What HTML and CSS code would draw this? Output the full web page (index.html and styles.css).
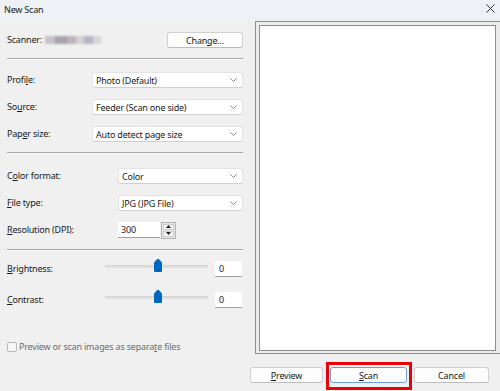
FILE: index.html
```html
<!DOCTYPE html>
<html lang="en">
<head>
    <meta charset="UTF-8">
    <title>New Scan</title>
    <link rel="stylesheet" href="styles.css">
</head>
<body>
    <div class="window">
        <div class="titlebar">
            <span class="title">New Scan</span>
            <svg class="close" width="9" height="9" viewBox="0 0 9 9"><path d="M0.5 0.5 L8.5 8.5 M8.5 0.5 L0.5 8.5" stroke="#333" stroke-width="1"/></svg>
        </div>
        <div class="content">
            <div class="settings">
                <div class="scanner-row">
                    <span class="label">Scanner:</span>
                    <span class="scanner-name"><i class="b1"></i><i class="b2"></i><i class="b3"></i><i class="b4"></i><i class="b5"></i><i class="b6"></i></span>
                    <button class="btn change">Chan<u>g</u>e...</button>
                </div>
                <div class="sep"></div>
                <div class="group wide">
                    <span class="label">Profi<u>l</u>e:</span>
                    <div class="select">Photo (Default)<svg class="chev" width="7" height="4" viewBox="0 0 7 4"><path d="M0.5 0.5 L3.5 3.5 L6.5 0.5" stroke="#8a8a8a" fill="none"/></svg></div>
                    <span class="label">So<u>u</u>rce:</span>
                    <div class="select">Feeder (Scan one side)<svg class="chev" width="7" height="4" viewBox="0 0 7 4"><path d="M0.5 0.5 L3.5 3.5 L6.5 0.5" stroke="#8a8a8a" fill="none"/></svg></div>
                    <span class="label">Pap<u>e</u>r size:</span>
                    <div class="select">Auto detect page size<svg class="chev" width="7" height="4" viewBox="0 0 7 4"><path d="M0.5 0.5 L3.5 3.5 L6.5 0.5" stroke="#8a8a8a" fill="none"/></svg></div>
                </div>
                <div class="sep"></div>
                <div class="group narrow">
                    <span class="label">C<u>o</u>lor format:</span>
                    <div class="select">Color<svg class="chev" width="7" height="4" viewBox="0 0 7 4"><path d="M0.5 0.5 L3.5 3.5 L6.5 0.5" stroke="#8a8a8a" fill="none"/></svg></div>
                    <span class="label"><u>F</u>ile type:</span>
                    <div class="select">JPG (JPG File)<svg class="chev" width="7" height="4" viewBox="0 0 7 4"><path d="M0.5 0.5 L3.5 3.5 L6.5 0.5" stroke="#8a8a8a" fill="none"/></svg></div>
                    <span class="label"><u>R</u>esolution (DPI):</span>
                    <div class="spin">
                        <div class="field">300</div>
                        <div class="spin-btns">
                            <span class="arrow"><svg width="5" height="3" viewBox="0 0 5 3"><path d="M0 3 L2.5 0 L5 3 Z" fill="#222"/></svg></span>
                            <span class="arrow"><svg width="5" height="3" viewBox="0 0 5 3"><path d="M0 0 L2.5 3 L5 0 Z" fill="#222"/></svg></span>
                        </div>
                    </div>
                </div>
                <div class="sep sep-low"></div>
                <div class="adjust">
                    <span class="label"><u>B</u>rightness:</span>
                    <div class="slider"><div class="track"></div><svg class="thumb" width="10" height="14" viewBox="0 0 10 14"><path d="M1 4.5 L4 1.2 Q5 0.2 6 1.2 L9 4.5 V13 Q9 14 8 14 H2 Q1 14 1 13 Z" fill="#0067c0"/></svg></div>
                    <div class="num">0</div>
                    <span class="label"><u>C</u>ontrast:</span>
                    <div class="slider"><div class="track"></div><svg class="thumb" width="10" height="14" viewBox="0 0 10 14"><path d="M1 4.5 L4 1.2 Q5 0.2 6 1.2 L9 4.5 V13 Q9 14 8 14 H2 Q1 14 1 13 Z" fill="#0067c0"/></svg></div>
                    <div class="num">0</div>
                </div>
                <label class="check">
                    <span class="box"></span>
                    <span>Preview or scan images as separa<u>t</u>e files</span>
                </label>
            </div>
            <div class="pane">
                <div class="frame"><div class="paper"></div></div>
                <div class="actions">
                    <button class="btn preview"><u>P</u>review</button>
                    <div class="scan-wrap">
                        <button class="btn scan"><u>S</u>can</button>
                        <div class="highlight"></div>
                    </div>
                    <button class="btn cancel">Cancel</button>
                </div>
            </div>
        </div>
    </div>
</body>
</html>
```

FILE: styles.css
```css
body {
    margin: 0;
    background: #f0f0f0;
    font-family: "Noto Sans", "Open Sans", sans-serif;
    font-size: 9px;
    letter-spacing: -0.2px;
    color: #1a1a1a;
    overflow: hidden;
}
.window {
    width: 500px;
    height: 391px;
}
.titlebar {
    height: 20px;
    background: #eef2f7;
    display: flex;
    align-items: center;
    justify-content: space-between;
    padding: 0 5px 2px 4px;
    box-sizing: border-box;
}
.close {
    margin-top: -1px;
}
.content {
    display: flex;
}
.settings {
    width: 250px;
    padding: 0 7px;
    box-sizing: border-box;
}
.label {
    line-height: 16px;
}
u {
    text-decoration-thickness: 1px;
    text-underline-offset: 1px;
}
.scanner-row {
    display: flex;
    align-items: center;
    margin-top: 12px;
    height: 16px;
}
.scanner-name {
    display: flex;
    margin-left: 3px;
    height: 8px;
    filter: blur(0.8px);
}
.scanner-name i {
    display: block;
    height: 8px;
}
.b1 { width: 10px; background: #c9c3cb; }
.b2 { width: 12px; background: #aaa2ac; }
.b3 { width: 9px; background: #bdb4bd; }
.b4 { width: 8px; background: #d3d3d3; }
.b5 { width: 9px; background: #b7b3c2; }
.b6 { width: 8px; background: #d8d6dc; }
.btn {
    font-family: inherit;
    font-size: 9px;
    letter-spacing: inherit;
    color: #1a1a1a;
    background: #fdfdfd;
    border: 1px solid #d0d0d0;
    border-bottom-color: #bcbcbc;
    border-radius: 3px;
    height: 16px;
    padding: 0;
    box-sizing: border-box;
}
.change {
    width: 76px;
    margin-left: auto;
}
.sep {
    height: 1px;
    background: #a8a8a8;
    border-bottom: 1px solid #fafafa;
    margin-top: 10px;
}
.group {
    display: grid;
    row-gap: 11px;
    align-items: center;
    margin-top: 12px;
}
.group.wide {
    grid-template-columns: 85px 1fr;
}
.group.narrow {
    grid-template-columns: 111px 1fr;
    margin-top: 14px;
}
.select {
    height: 16px;
    background: #fff;
    border: 1px solid #e3e3e3;
    border-bottom-color: #cfcfcf;
    border-radius: 3px;
    box-sizing: border-box;
    display: flex;
    align-items: center;
    padding: 0 5px 0 3px;
}
.chev {
    margin-left: auto;
}
.spin {
    display: flex;
    align-items: center;
    height: 16px;
}
.field {
    width: 42px;
    height: 16px;
    background: #fff;
    border-bottom: 1px solid #a0a0a0;
    box-sizing: border-box;
    padding-left: 3px;
    line-height: 15px;
}
.spin-btns {
    display: flex;
    flex-direction: column;
    gap: 1px;
    margin-left: 1px;
    padding: 1px;
    border: 1px solid #b4b4b4;
    background: #e8e8e8;
}
.arrow {
    width: 11px;
    height: 6px;
    background: #f6f6f6;
    border: 1px solid #cdcdcd;
    box-sizing: border-box;
    display: flex;
    align-items: center;
    justify-content: center;
}
.sep-low {
    margin-top: 11px;
}
.adjust {
    display: grid;
    grid-template-columns: 91px 103px 27px;
    column-gap: 7px;
    row-gap: 15px;
    align-items: center;
    margin-top: 10px;
}
.slider {
    position: relative;
    height: 16px;
}
.track {
    margin-top: 4px;
    height: 3px;
    background: #e0e0e0;
    border-top: 1px solid #d4d4d4;
    box-sizing: border-box;
}
.thumb {
    position: absolute;
    left: 48px;
    top: -3px;
}
.num {
    height: 16px;
    background: #fff;
    border-bottom: 1px solid #a0a0a0;
    box-sizing: border-box;
    padding-left: 4px;
    line-height: 15px;
}
.check {
    display: flex;
    align-items: center;
    gap: 2px;
    margin-top: 32px;
    color: #6d6d6d;
}
.box {
    width: 10px;
    height: 10px;
    border: 1px solid #b8b8b8;
    border-radius: 2px;
    box-sizing: border-box;
    background: #f6f6f6;
}
.pane {
    flex: 1;
    padding-top: 1px;
}
.frame {
    margin-left: 5px;
    height: 333px;
    border: 1px solid #8e8e8e;
    border-right: none;
    padding: 3px 4px 2px 3px;
    box-sizing: border-box;
    background: #ececec;
}
.paper {
    height: 100%;
    background: #fff;
    border: 1px solid #8e8e8e;
    box-sizing: border-box;
}
.actions {
    display: flex;
    gap: 7px;
    margin-top: 13px;
}
.preview {
    width: 73px;
}
.scan-wrap {
    position: relative;
}
.scan {
    width: 77px;
    border-color: #6e9fd0;
}
.highlight {
    position: absolute;
    left: -4px;
    top: -5px;
    width: 86px;
    height: 28px;
    border: 3px solid #e8000b;
    box-sizing: border-box;
}
.cancel {
    width: 75px;
}
```
